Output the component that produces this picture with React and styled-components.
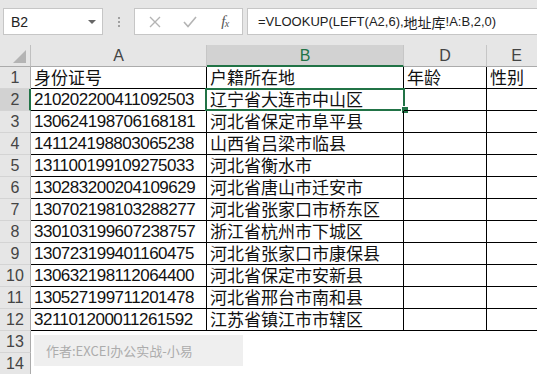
import React from "react";
import styled, { createGlobalStyle } from "styled-components";

const GlobalStyle = createGlobalStyle`
  html, body { margin: 0; padding: 0; background: #fff; overflow: hidden; }
  *, *::before, *::after { box-sizing: border-box; }
  body { font-family: "Liberation Sans", "Noto Sans CJK SC", sans-serif; color: #000; }
`;

const GREEN = "#217346";
const HEAD_BG = "#e6e6e6";

const Page = styled.div`
  width: 537px;
  height: 374px;
  overflow: hidden;
  background: #fff;
`;

const Toolbar = styled.div`
  height: 45px;
  background: ${HEAD_BG};
  display: flex;
  align-items: flex-start;
  padding: 8px 0 0 3px;
`;

const Box = styled.div`
  height: 27px;
  background: #fff;
  border: 1px solid #c6c6c6;
  display: flex;
  align-items: center;
`;

const NameBox = styled(Box)`
  width: 100px;
  padding: 0 6px 0 7px;
  justify-content: space-between;
  font-size: 14px;
  color: #222;
`;

const DropArrow = styled.span`
  width: 0;
  height: 0;
  border-left: 4px solid transparent;
  border-right: 4px solid transparent;
  border-top: 4px solid #666;
  margin-top: 1px;
`;

const Grip = styled.div`
  width: 31px;
  height: 27px;
  display: flex;
  flex-direction: column;
  align-items: center;
  justify-content: center;
  gap: 2px;
`;

const GripDot = styled.span`
  width: 2px;
  height: 2px;
  background: #a0a0a0;
`;

const FxBox = styled(Box)`
  width: 109px;
  padding-left: 14px;
`;

const IconSlot = styled.span`
  width: ${(p) => p.$w}px;
  margin-left: ${(p) => p.$ml || 0}px;
  display: flex;
  align-items: center;
  justify-content: center;
`;

const FxText = styled.span`
  font-family: "Liberation Serif", serif;
  font-style: italic;
  font-size: 15px;
  color: #555;
  letter-spacing: -0.5px;
  sub { font-size: 10px; vertical-align: -1px; }
`;

const FormulaBox = styled(Box)`
  flex: 1;
  margin-left: 4px;
  margin-right: -3px;
  padding-left: 10px;
  font-size: 13px;
  color: #222;
  white-space: nowrap;
`;

const Cjk = styled.span`
  font-family: "Noto Sans CJK SC", sans-serif;
  font-size: ${(p) => p.$size || 14}px;
`;

const GridWrap = styled.div`
  position: relative;
`;

const Grid = styled.div`
  display: grid;
  grid-template-columns: 31px 176px 197px 83px 60px;
  grid-auto-rows: 22px;
  width: 547px;
`;

const Corner = styled.div`
  background: ${HEAD_BG};
  border-right: 1px solid #c0c0c0;
  border-bottom: 1px solid #ababab;
  display: flex;
  align-items: flex-end;
  justify-content: flex-end;
  padding: 0 4px 3px 0;
`;

const ColHead = styled.div`
  background: ${(p) => (p.$sel ? "#d2d2d2" : HEAD_BG)};
  border-right: 1px solid #c6c6c6;
  border-bottom: ${(p) => (p.$sel ? `2px solid ${GREEN}` : "1px solid #ababab")};
  color: ${(p) => (p.$sel ? GREEN : "#444")};
  font-size: 16px;
  display: flex;
  align-items: center;
  justify-content: center;
  padding-top: ${(p) => (p.$sel ? 1 : 0)}px;
`;

const RowHead = styled.div`
  background: ${(p) => (p.$sel ? "#d2d2d2" : HEAD_BG)};
  border-right: ${(p) => (p.$sel ? `2px solid ${GREEN}` : "1px solid #ababab")};
  border-bottom: 1px solid #d4d4d4;
  color: #444;
  font-size: 16px;
  display: flex;
  align-items: center;
  justify-content: center;
  padding-left: ${(p) => (p.$sel ? 1 : 0)}px;
`;

const Cell = styled.div`
  position: relative;
  border-right: 1px solid #000;
  border-bottom: 1px solid #000;
  padding: 0 0 1px 3px;
  display: flex;
  align-items: flex-end;
  white-space: nowrap;
  font-family: ${(p) =>
    p.$cjk ? `"Noto Sans CJK SC", sans-serif` : `"Liberation Sans", sans-serif`};
  font-size: 17px;
  letter-spacing: ${(p) => (p.$cjk ? 0 : -0.5)}px;
  line-height: ${(p) => (p.$cjk ? 21 : 19)}px;
  color: #111;
`;

const BlankCell = styled.div`
  background: #fff;
`;

const Selection = styled.div`
  position: absolute;
  top: -1px;
  left: -2px;
  right: -2px;
  bottom: -1px;
  border: 2px solid ${GREEN};
  pointer-events: none;
`;

const FillHandle = styled.div`
  position: absolute;
  right: -5px;
  bottom: -4px;
  width: 6px;
  height: 6px;
  background: ${GREEN};
  box-shadow: 0 0 0 1px #fff;
`;

const Watermark = styled.div`
  position: absolute;
  left: 34px;
  top: 290px;
  width: 209px;
  height: 31px;
  background: #efefef;
  display: flex;
  align-items: center;
  padding-left: 12px;
  font-family: "Noto Sans CJK SC", sans-serif;
  font-size: 13px;
  color: #acacac;
`;

const rows = [
  ["210202200411092503", "辽宁省大连市中山区"],
  ["130624198706168181", "河北省保定市阜平县"],
  ["141124198803065238", "山西省吕梁市临县"],
  ["131100199109275033", "河北省衡水市"],
  ["130283200204109629", "河北省唐山市迁安市"],
  ["130702198103288277", "河北省张家口市桥东区"],
  ["330103199607238757", "浙江省杭州市下城区"],
  ["130723199401160475", "河北省张家口市康保县"],
  ["130632198112064400", "河北省保定市安新县"],
  ["130527199711201478", "河北省邢台市南和县"],
  ["321101200011261592", "江苏省镇江市市辖区"],
];

export default function App() {
  return (
    <Page>
      <GlobalStyle />
      <Toolbar>
        <NameBox>
          <span>B2</span>
          <DropArrow />
        </NameBox>
        <Grip>
          <GripDot />
          <GripDot />
          <GripDot />
        </Grip>
        <FxBox>
          <IconSlot $w={12}>
            <svg width="12" height="12" viewBox="0 0 12 12">
              <path d="M1 1 L11 11 M11 1 L1 11" stroke="#b4b4b4" strokeWidth="1.4" fill="none" />
            </svg>
          </IconSlot>
          <IconSlot $w={30} $ml={14}>
            <svg width="14" height="12" viewBox="0 0 14 12">
              <path d="M1 6 L5 10.5 L13 1" stroke="#b4b4b4" strokeWidth="1.6" fill="none" />
            </svg>
          </IconSlot>
          <IconSlot $w={30} $ml={5}>
            <FxText>
              f<sub>x</sub>
            </FxText>
          </IconSlot>
        </FxBox>
        <FormulaBox>
          =VLOOKUP(LEFT(A2,6),<Cjk>地址库</Cjk>!A:B,2,0)
        </FormulaBox>
      </Toolbar>
      <GridWrap>
        <Grid>
          <Corner>
            <svg width="13" height="13" viewBox="0 0 13 13">
              <path d="M13 0 L13 13 L0 13 Z" fill="#b4b4b4" />
            </svg>
          </Corner>
          <ColHead>A</ColHead>
          <ColHead $sel>B</ColHead>
          <ColHead>D</ColHead>
          <ColHead>E</ColHead>

          <RowHead>1</RowHead>
          <Cell $cjk>身份证号</Cell>
          <Cell $cjk>户籍所在地</Cell>
          <Cell $cjk>年龄</Cell>
          <Cell $cjk>性别</Cell>

          {rows.map(([id, place], i) => (
            <React.Fragment key={id}>
              <RowHead $sel={i === 0}>{i + 2}</RowHead>
              <Cell>{id}</Cell>
              <Cell $cjk>
                {place}
                {i === 0 && (
                  <Selection>
                    <FillHandle />
                  </Selection>
                )}
              </Cell>
              <Cell />
              <Cell />
            </React.Fragment>
          ))}

          {[13, 14].map((n) => (
            <React.Fragment key={n}>
              <RowHead>{n}</RowHead>
              <BlankCell />
              <BlankCell />
              <BlankCell />
              <BlankCell />
            </React.Fragment>
          ))}
        </Grid>
        <Watermark>作者:EXCEI办公实战-小易</Watermark>
      </GridWrap>
    </Page>
  );
}
